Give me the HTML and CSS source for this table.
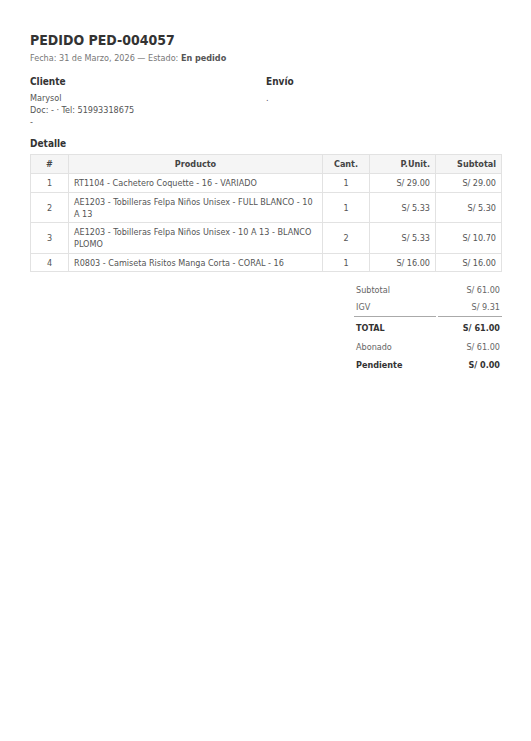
FILE: index.html
```html
<!DOCTYPE html>
<html lang="es">
<head>
<meta charset="utf-8">
<link rel="stylesheet" href="styles.css">
</head>
<body>
<div class="page">
  <h1 class="title">PEDIDO PED-004057</h1>
  <div class="meta">Fecha: 31 de Marzo, 2026 — Estado: <b>En pedido</b></div>

  <div class="parties">
    <div class="party">
      <h3 class="sec">Cliente</h3>
      <div class="line">Marysol</div>
      <div class="line">Doc: - · Tel: 51993318675</div>
      <div class="line">-</div>
    </div>
    <div class="party">
      <h3 class="sec">Envío</h3>
      <div class="line">.</div>
    </div>
  </div>

  <h3 class="sec detalle">Detalle</h3>
  <table class="items">
    <thead>
      <tr>
        <th class="c-num">#</th>
        <th class="c-prod">Producto</th>
        <th class="c-qty">Cant.</th>
        <th class="c-unit">P.Unit.</th>
        <th class="c-sub">Subtotal</th>
      </tr>
    </thead>
    <tbody>
      <tr>
        <td class="c-num">1</td>
        <td class="c-prod">RT1104 - Cachetero Coquette - 16 - VARIADO</td>
        <td class="c-qty">1</td>
        <td class="c-unit">S/ 29.00</td>
        <td class="c-sub">S/ 29.00</td>
      </tr>
      <tr>
        <td class="c-num">2</td>
        <td class="c-prod">AE1203 - Tobilleras Felpa Niños Unisex - FULL BLANCO - 10 A 13</td>
        <td class="c-qty">1</td>
        <td class="c-unit">S/ 5.33</td>
        <td class="c-sub">S/ 5.30</td>
      </tr>
      <tr>
        <td class="c-num">3</td>
        <td class="c-prod">AE1203 - Tobilleras Felpa Niños Unisex - 10 A 13 - BLANCO PLOMO</td>
        <td class="c-qty">2</td>
        <td class="c-unit">S/ 5.33</td>
        <td class="c-sub">S/ 10.70</td>
      </tr>
      <tr>
        <td class="c-num">4</td>
        <td class="c-prod">R0803 - Camiseta Risitos Manga Corta - CORAL - 16</td>
        <td class="c-qty">1</td>
        <td class="c-unit">S/ 16.00</td>
        <td class="c-sub">S/ 16.00</td>
      </tr>
    </tbody>
  </table>

  <div class="totals-wrap">
    <table class="totals">
      <tr><td>Subtotal</td><td class="r">S/ 61.00</td></tr>
      <tr class="sep"><td>IGV</td><td class="r">S/ 9.31</td></tr>
      <tr class="strong total"><td>TOTAL</td><td class="r">S/ 61.00</td></tr>
      <tr><td>Abonado</td><td class="r">S/ 61.00</td></tr>
      <tr class="strong pend"><td>Pendiente</td><td class="r">S/ 0.00</td></tr>
    </table>
  </div>
</div>
</body>
</html>
```

FILE: styles.css
```css
html, body {
  margin: 0;
  padding: 0;
  background: #ffffff;
}
body {
  font-family: "DejaVu Sans Condensed", "DejaVu Sans", sans-serif;
  color: #444;
  font-size: 9px;
}
.page {
  padding: 31px 29px 0 30px;
}
.title {
  margin: 0;
  font-size: 14px;
  line-height: 18px;
  font-weight: bold;
  color: #333;
}
.meta {
  margin-top: 3px;
  font-size: 9px;
  line-height: 12px;
  color: #777;
}
.meta b {
  color: #555;
}
.parties {
  display: flex;
  margin-top: 12px;
}
.party {
  flex: 1 1 0;
}
.sec {
  margin: 0;
  font-size: 10px;
  line-height: 12px;
  font-weight: bold;
  color: #333;
}
.line {
  font-size: 9px;
  line-height: 12px;
  color: #555;
}
.party .sec {
  margin-bottom: 4px;
}
.detalle {
  margin-top: 10px;
  margin-bottom: 4px;
}
.items {
  width: 100%;
  border-collapse: collapse;
  font-size: 9px;
  color: #555;
}
.items th, .items td {
  border: 1px solid #e2e2e2;
  padding: 3px 5px 2.5px;
  line-height: 12px;
}
.items th {
  background: #f5f5f5;
  color: #444;
  font-weight: bold;
  padding: 3px 5px 3px;
}
.items .c-num { width: 27px; text-align: center; }
.items .c-prod { text-align: left; }
.items th.c-prod { text-align: center; }
.items .c-qty { width: 36px; text-align: center; }
.items .c-unit { width: 55px; text-align: right; }
.items .c-sub { width: 55px; text-align: right; }

.totals-wrap {
  display: flex;
  justify-content: flex-end;
  margin-top: 9px;
}
.totals {
  width: 152px;
  border-collapse: separate;
  border-spacing: 2px 0;
  margin-right: -2px;
  font-size: 9px;
  color: #666;
}
.totals td {
  padding: 2.5px 2px;
  line-height: 12px;
}
.totals td.r {
  text-align: right;
  width: 60px;
}
.totals tr.sep td {
  border-bottom: 1px solid #aaa;
  padding-bottom: 3px;
}
.totals tr.strong td {
  font-weight: bold;
  color: #333;
}
.totals tr.total td {
  padding-top: 5px;
  padding-bottom: 5px;
}
.totals tr.pend td {
  padding-top: 3px;
}
```
